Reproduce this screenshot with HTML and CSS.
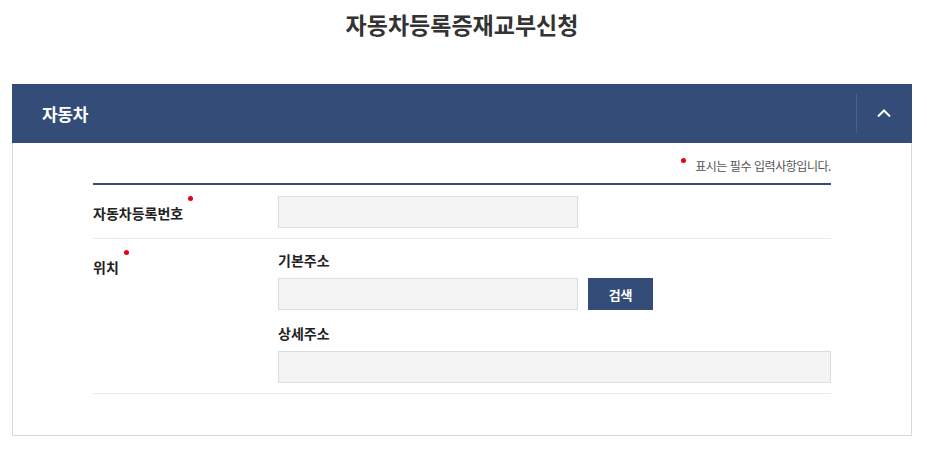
FILE: index.html
```html
<!DOCTYPE html>
<html lang="ko">
<head>
<meta charset="utf-8">
<title>자동차등록증재교부신청</title>
<link rel="stylesheet" href="styles.css">
</head>
<body>
<div class="page">
  <h1 class="title">자동차등록증재교부신청</h1>
  <section class="panel">
    <div class="panel-head">
      <h2 class="panel-title">자동차</h2>
      <button class="toggle" type="button" aria-label="접기">
        <svg width="14" height="8" viewBox="0 0 14 8"><polyline points="1,7.5 7,1.5 13,7.5" fill="none" stroke="#fff" stroke-width="2"/></svg>
      </button>
    </div>
    <div class="panel-body">
      <p class="note"><span class="dot"></span>표시는 필수 입력사항입니다.</p>
      <div class="form">
        <div class="row">
          <div class="label">자동차등록번호<span class="dot req"></span></div>
          <div class="field">
            <input class="input w300" type="text">
          </div>
        </div>
        <div class="row">
          <div class="label">위치<span class="dot req"></span></div>
          <div class="field">
            <div class="sub">기본주소</div>
            <div class="line">
              <input class="input w300" type="text">
              <button class="btn" type="button">검색</button>
            </div>
            <div class="sub sub2">상세주소</div>
            <input class="input full" type="text">
          </div>
        </div>
      </div>
    </div>
  </section>
</div>
</body>
</html>
```

FILE: styles.css
```css
* { box-sizing: border-box; }
html, body { margin: 0; padding: 0; background: #fff; }
body {
  font-family: "Noto Sans CJK KR", "Noto Sans", sans-serif;
  color: #222;
}
.page {
  width: 900px;
  margin-left: 12px;
}
.title {
  margin: 0;
  height: 84px;
  padding-top: 8px;
  font-size: 23px;
  line-height: 32px;
  letter-spacing: 0;
  font-weight: 700;
  color: #333;
  text-align: center;
}
.panel-head {
  height: 59px;
  background: #344c78;
  display: flex;
  align-items: center;
  justify-content: space-between;
}
.panel-title {
  margin: 0 0 0 30px;
  font-size: 17px;
  letter-spacing: -0.3px;
  font-weight: 700;
  color: #fff;
  line-height: 24px;
}
.toggle {
  width: 56px;
  height: 39px;
  border: 0;
  border-left: 1px solid #4a6190;
  background: transparent;
  display: flex;
  align-items: center;
  justify-content: center;
  padding: 0 2px 2px 0;
}
.panel-body {
  border: 1px solid #d9d9d9;
  border-top: 0;
  padding: 6px 80px 41px 80px;
}
.note {
  margin: 0;
  height: 34px;
  display: flex;
  justify-content: flex-end;
  align-items: center;
  font-size: 12px;
  letter-spacing: -0.45px;
  color: #555;
  padding-bottom: 2px;
}
.note .dot {
  margin-right: 9px;
  margin-top: -10px;
}
.dot {
  display: inline-block;
  width: 5px;
  height: 5px;
  border-radius: 50%;
  background: #e60012;
}
.form {
  border-top: 2px solid #344c78;
}
.row {
  display: flex;
  border-bottom: 1px solid #eaeaea;
}
.label {
  width: 185px;
  flex: none;
  padding-top: 18px;
  font-size: 14px;
  line-height: 20px;
  letter-spacing: 0;
  font-weight: 700;
  color: #222;
  display: flex;
  align-items: flex-start;
}
.req {
  margin-left: 5px;
  margin-top: -7px;
}
.field {
  flex: 1;
  padding: 11px 0 10px;
}
.sub {
  font-size: 14px;
  line-height: 20px;
  letter-spacing: 0;
  font-weight: 700;
  color: #222;
  margin-bottom: 8px;
}
.sub2 { margin-top: 13px; }
.line {
  display: flex;
  gap: 10px;
}
.input {
  display: block;
  height: 32px;
  background: #f4f4f4;
  border: 1px solid #dcdcdc;
  border-radius: 0;
  margin: 0;
  padding: 0 10px;
  font: inherit;
}
.w300 { width: 300px; }
.full { width: 100%; }
.btn {
  width: 65px;
  height: 32px;
  border: 0;
  background: #344c78;
  color: #fff;
  font-family: inherit;
  font-size: 13px;
  font-weight: 700;
  letter-spacing: -0.3px;
  padding: 0;
}
```
